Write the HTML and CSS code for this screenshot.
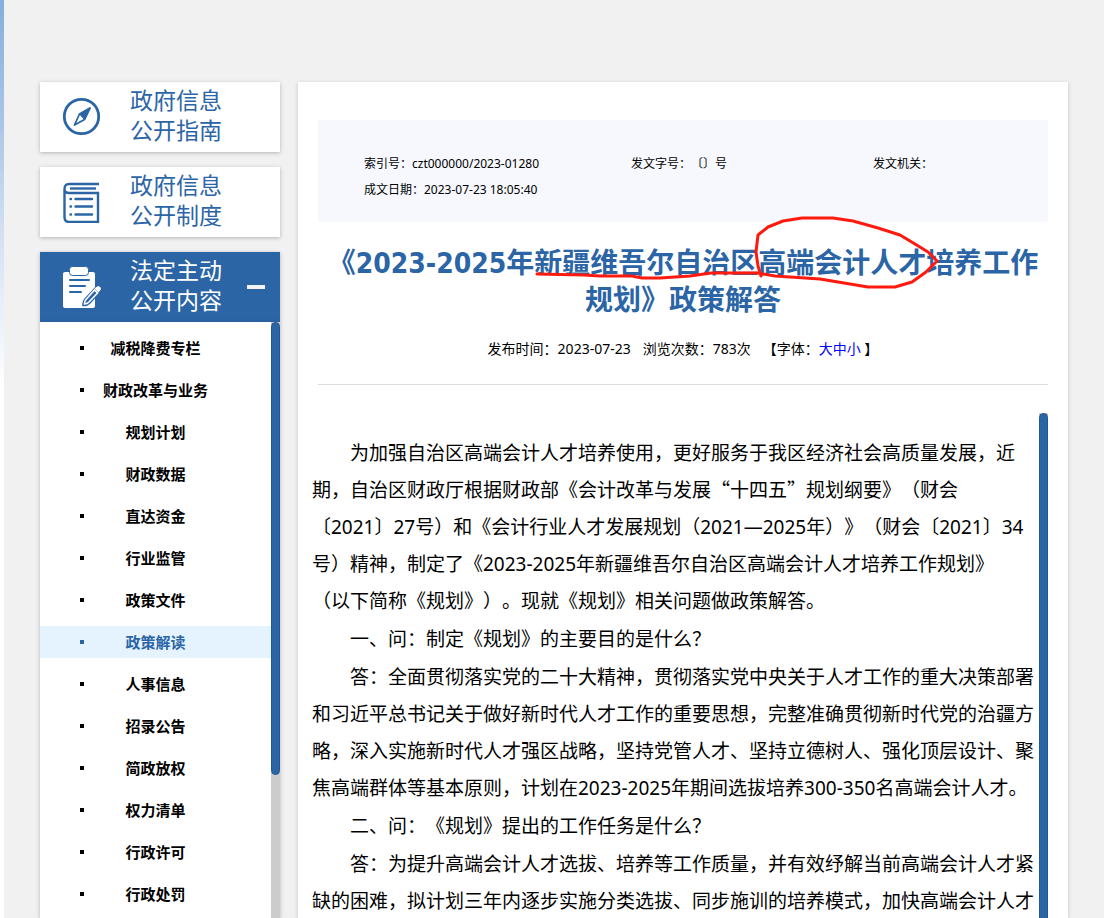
FILE: index.html
```html
<!DOCTYPE html>
<html lang="zh-CN">
<head>
<meta charset="utf-8">
<title>政策解读</title>
<link rel="stylesheet" href="styles.css">
</head>
<body>
<div class="page">
  <nav class="sidebar" aria-label="政府信息公开">
    <a class="card" href="#guide">
      <svg class="card-icon" viewBox="0 0 38 42" fill="none" stroke="#2b65a6">
        <circle cx="18.5" cy="20.5" r="17.2" stroke-width="2.8"/>
        <path d="M27 12 L21.5 23.5 L11.5 29 L16.5 18 Z" stroke-width="1.8" stroke-linejoin="round"/>
        <path d="M27 12 L21.5 23.5 L16.5 18 Z" fill="#2b65a6" stroke-width="1"/>
      </svg>
      <span class="card-title">政府信息<br>公开指南</span>
    </a>
    <a class="card" href="#rules">
      <svg class="card-icon" viewBox="0 0 38 42" fill="none" stroke="#2b65a6" stroke-width="2.4">
        <path d="M36 3 H6 Q1.5 3 1.5 8 V36 Q1.5 41 6 41 H35 V12 H6 Q1.5 12 1.5 8"/>
        <path d="M7 7.5 H33"/>
        <path d="M12.5 18 H29 M12.5 25.5 H29 M12.5 33.5 H29" stroke-linecap="round"/>
        <path d="M7.5 18 H8 M7.5 25.5 H8 M7.5 33.5 H8" stroke-linecap="round"/>
      </svg>
      <span class="card-title">政府信息<br>公开制度</span>
    </a>
    <a class="card card-active" href="#content">
      <svg class="card-icon" viewBox="0 0 38 42">
        <rect x="0" y="6" width="32" height="36" rx="2" fill="#fff"/>
        <rect x="6.5" y="0.5" width="19" height="9" rx="3" fill="#fff" stroke="#2b65a6"/>
        <path d="M7 14 H26 M7 20 H22 M7 26 H18" stroke="#2b65a6" stroke-width="2" stroke-linecap="round"/>
        <path d="M20 39.5 Q19.500 36 22 33 L33 21 Q36 19 38 22 L37 26 L27 37 Q24 40 20 39.500 Z" fill="#2b65a6" stroke="#2b65a6" stroke-width="1.500"/>
        <path d="M21.500 38 Q21.500 35 23 33.500 L31.500 24 L34.500 27 L26 36 Q24 38 21.500 38 Z" fill="#2b65a6" stroke="#fff" stroke-width="1.600"/>
        <path d="M31.500 22.500 L34 20.500 Q36 19.500 37.500 21.500 Q38.500 23 37 24.500 L35.500 26.500 Z" fill="#fff"/>
      </svg>
      <span class="card-title">法定主动<br>公开内容</span>
      <span class="card-toggle"></span>
    </a>
    <div class="menu">
      <ul class="menu-list">
        <li><a href="#m1">减税降费专栏</a></li>
        <li><a href="#m2">财政改革与业务</a></li>
        <li><a href="#m3">规划计划</a></li>
        <li><a href="#m4">财政数据</a></li>
        <li><a href="#m5">直达资金</a></li>
        <li><a href="#m6">行业监管</a></li>
        <li><a href="#m7">政策文件</a></li>
        <li><a class="current" href="#m8">政策解读</a></li>
        <li><a href="#m9">人事信息</a></li>
        <li><a href="#m10">招录公告</a></li>
        <li><a href="#m11">简政放权</a></li>
        <li><a href="#m12">权力清单</a></li>
        <li><a href="#m13">行政许可</a></li>
        <li><a href="#m14">行政处罚</a></li>
      </ul>
      <div class="track"><div class="thumb menu-thumb"></div></div>
    </div>
  </nav>
  <main class="article">
    <div class="meta">
      <span>索引号：czt000000/2023-01280</span>
      <span>发文字号：〔〕号</span>
      <span>发文机关：</span>
      <span>成文日期：2023-07-23 18:05:40</span>
    </div>
    <header class="headline">
      <h1>《2023-2025年新疆维吾尔自治区高端会计人才培养工作<br>规划》政策解答</h1>
      <svg class="marking" viewBox="318 214 730 76" fill="none" stroke="#ff1a0f" stroke-width="3" stroke-linejoin="round" stroke-linecap="round">
        <path d="M537 274 L584 275 L600 276 L632 276 L642 278 L660 278 L690 276 L711 273 L757 273 L775 276 L820 279 L850 284 L868 287 L895 287 L912 282 L926 272 L937 261 L928 252 L915 244 L900 235 L878 228 L853 221 L833 218 L802 218 L783 221 L768 227 L758 235 L756 252 L758 266 L761 276"/>
      </svg>
      <div class="info">
        <span>发布时间：2023-07-23</span>
        <span>浏览次数：783次</span>
        <span>【字体：<a href="#large">大</a><a href="#medium">中</a><a href="#small">小</a> 】</span>
      </div>
    </header>
    <div class="reader">
      <div class="text">
        <p>为加强自治区高端会计人才培养使用，更好服务于我区经济社会高质量发展，近期，自治区财政厅根据财政部《会计改革与发展<span class="quoted">“十四五”</span>规划纲要》（财会<br>〔2021〕27号）和《会计行业人才发展规划（2021—2025年）》（财会〔2021〕34<br>号）精神，制定了《2023-2025年新疆维吾尔自治区高端会计人才培养工作规划》<br>（以下简称《规划》）。现就《规划》相关问题做政策解答。</p>
        <p>一、问：制定《规划》的主要目的是什么？</p>
        <p>答：全面贯彻落实党的二十大精神，贯彻落实党中央关于人才工作的重大决策部署和习近平总书记关于做好新时代人才工作的重要思想，完整准确贯彻新时代党的治疆方略，深入实施新时代人才强区战略，坚持党管人才、坚持立德树人、强化顶层设计、聚焦高端群体等基本原则，计划在2023-2025年期间选拔培养300-350名高端会计人才。</p>
        <p>二、问：《规划》提出的工作任务是什么？</p>
        <p>答：为提升高端会计人才选拔、培养等工作质量，并有效纾解当前高端会计人才紧缺的困难，拟计划三年内逐步实施分类选拔、同步施训的培养模式，加快高端会计人才</p>
      </div>
      <div class="track"><div class="thumb reader-thumb"></div></div>
    </div>
  </main>
</div>
</body>
</html>
```
FILE: styles.css
```css
* {
  box-sizing: border-box;
}

body {
  margin: 0;
  height: 100vh;
  overflow: hidden;
  padding-left: 4px;
  background: #fff linear-gradient(#86aedd 0, #a9c5e5 120px, #d5e2f3 240px, #fff 390px) no-repeat;
  color: #000;
  font-family: "Noto Sans", "Noto Sans CJK SC", sans-serif;
  text-spacing-trim: space-all;
}

a {
  text-decoration: none;
}

.page {
  display: flex;
  gap: 18px;
  height: 100%;
  padding: 82px 36px 0;
  background: #f1f1f1;
}

.sidebar {
  display: flex;
  flex: 0 0 240px;
  flex-direction: column;
}

.card {
  display: flex;
  align-items: center;
  flex: none;
  height: 70px;
  margin-bottom: 15px;
  padding: 0 15px 0 23px;
  background: #fff;
  box-shadow: 0 1px 4px rgba(0, 0, 0, 0.25);
  color: #2b65a6;
}

.card-active {
  margin-bottom: 0;
  background: #2b65a6;
  color: #fff;
}

.card-icon {
  width: 38px;
  height: 42px;
  margin-right: 29px;
}

.card-title {
  padding-bottom: 4px;
  font-size: 23px;
  line-height: 30px;
}

.card-toggle {
  width: 18px;
  height: 4px;
  margin-left: auto;
  background: #f1f4fa;
}

.menu {
  display: flex;
  flex: 1;
  min-height: 0;
  background: #fff;
  box-shadow: 0 1px 4px rgba(0, 0, 0, 0.25);
}

.menu-list {
  display: flex;
  flex: 1;
  flex-direction: column;
  gap: 10px;
  margin: 0;
  padding: 10px 0 0;
  overflow: hidden;
  list-style: none;
}

.menu-list a {
  display: grid;
  grid-template-columns: 44px 1fr 44px;
  align-items: center;
  color: #000;
  font-size: 15px;
  font-weight: 700;
  line-height: 32px;
  text-align: center;
}

.menu-list a::before {
  width: 4px;
  height: 4px;
  background: currentColor;
  content: "";
  justify-self: end;
}

.menu-list .current {
  background: #e5f3ff;
  color: #2b65a6;
}

.track {
  flex: 0 0 9px;
  background: #ccc;
}

.thumb {
  border: 1px solid #24568f;
  border-radius: 5px;
  background: #2b65a6;
}

.menu-thumb {
  height: 76%;
}

.reader-thumb {
  height: 110%;
}

.article {
  display: flex;
  flex: 1;
  flex-direction: column;
  min-width: 0;
  padding-top: 38px;
  background: #fff;
  box-shadow: 0 1px 4px rgba(0, 0, 0, 0.2);
}

.meta {
  display: grid;
  grid-template-columns: 267fr 242fr 175fr;
  margin: 0 20px;
  padding: 31px 0 19px 46px;
  background: #f6f8fd;
  font-size: 12px;
  line-height: 26px;
}

.headline {
  position: relative;
  margin: 23px 20px 0;
  padding-bottom: 25px;
  border-bottom: 1px solid #ddd;
}

h1 {
  margin: 0;
  color: #2b65a6;
  font-family: "DejaVu Sans Condensed", "Noto Sans CJK SC", sans-serif;
  font-size: 28px;
  line-height: 37px;
  text-align: center;
}

.marking {
  position: absolute;
  top: -31px;
  left: 0;
  width: 100%;
  overflow: visible;
  pointer-events: none;
}

.info {
  display: flex;
  justify-content: center;
  gap: 12px;
  margin-top: 20px;
  font-size: 14px;
  line-height: 20px;
}

.info a {
  color: #00f;
}

.reader {
  display: flex;
  flex: 1;
  min-height: 0;
  margin: 28px 20px 0 14px;
  overflow: hidden;
}

.text {
  flex: 1;
  min-width: 0;
  padding-top: 22px;
  font-size: 19px;
  line-height: 37px;
}

.text p {
  margin: 0 0 1px;
  text-indent: 2em;
}

.quoted {
  font-family: "Noto Sans CJK SC", sans-serif;
  line-height: 1;
}
```
